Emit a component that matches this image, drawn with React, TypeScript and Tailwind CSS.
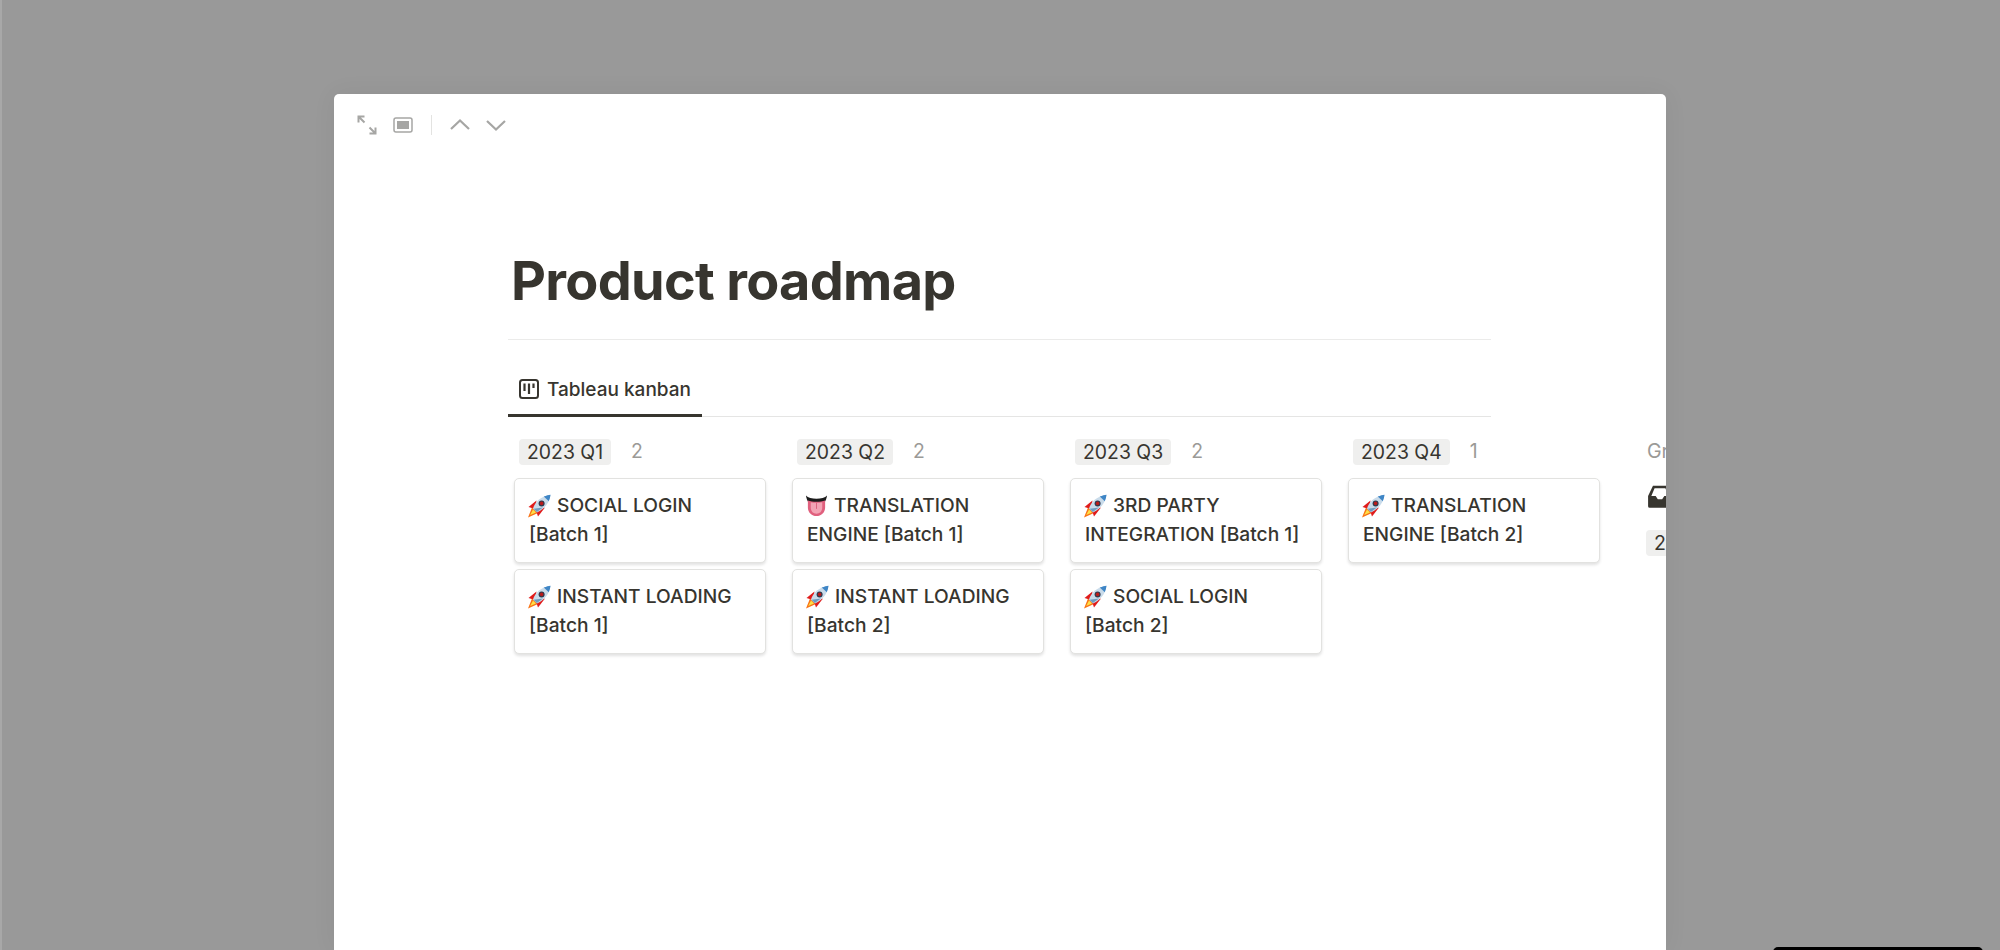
import React from 'react';

const RocketIcon = () => (
  <svg viewBox="0 0 24 24" className="-ml-[1px] h-[24px] w-[24px] shrink-0">
    <path d="M1 23.5 L5 13.5 L11 19 Z" fill="#f97316" />
    <path d="M3.2 21 L6 15.5 L9 18.5 Z" fill="#fde047" />
    <path d="M1.5 13 L9.5 6.5 L8 15 Z" fill="#e01b1b" />
    <path d="M11 22.5 L18 13.5 L9 16.5 Z" fill="#e01b1b" />
    <path d="M6 14.5 C8 8 14 2 23.5 0.8 C22.5 9.5 16.5 15.5 10 18.5 Z" fill="#c9dbea" />
    <path d="M16.8 2.6 C19.5 1.6 21.5 1 23.5 0.8 C23.3 3 22.7 5.2 21.8 7.2 Z" fill="#3f86c6" />
    <path d="M6.6 14.8 L9.8 18 L16 13.5 Z" fill="#6f9cc0" />
    <circle cx="14.6" cy="9.4" r="3" fill="#2f3b4f" />
    <circle cx="14.6" cy="9.4" r="1.8" fill="#b91c1c" />
  </svg>
);

const TongueIcon = () => (
  <svg viewBox="0 0 24 24" className="-ml-[1px] h-[23px] w-[23px] shrink-0">
    <path d="M1 1.5 C5 6 19 6 23 1.5 C22.5 5 21.5 7 20.5 8.5 L3.5 8.5 C2.5 7 1.5 5 1 1.5 Z" fill="#1c1c1c" />
    <path d="M3 6.8 C8 8.6 16 8.6 21 6.8 L21 14 C21 19.5 17 23 12 23 C7 23 3 19.5 3 14 Z" fill="#e0607e" />
    <path d="M6 8.5 C9 9.2 15 9.2 18 8.5 L18 14 C18 18 15.5 20.5 12 20.5 C8.5 20.5 6 18 6 14 Z" fill="#f3a3b4" />
    <path d="M12 9 L12 15.5" stroke="#d9607c" strokeWidth="1" />
  </svg>
);

const columns = [
  {
    name: '2023 Q1',
    count: 2,
    cards: [
      { icon: 'rocket', first: 'SOCIAL LOGIN', second: '[Batch 1]' },
      { icon: 'rocket', first: 'INSTANT LOADING', second: '[Batch 1]' },
    ],
  },
  {
    name: '2023 Q2',
    count: 2,
    cards: [
      { icon: 'tongue', first: 'TRANSLATION', second: 'ENGINE [Batch 1]' },
      { icon: 'rocket', first: 'INSTANT LOADING', second: '[Batch 2]' },
    ],
  },
  {
    name: '2023 Q3',
    count: 2,
    cards: [
      { icon: 'rocket', first: '3RD PARTY', second: 'INTEGRATION [Batch 1]' },
      { icon: 'rocket', first: 'SOCIAL LOGIN', second: '[Batch 2]' },
    ],
  },
  {
    name: '2023 Q4',
    count: 1,
    cards: [{ icon: 'rocket', first: 'TRANSLATION', second: 'ENGINE [Batch 2]' }],
  },
];

export default function App() {
  return (
    <div className="relative h-[950px] w-[2000px] overflow-hidden border-l-2 border-[#a8a8a8] bg-[#999999] pt-[94px] pl-[332px] font-['Inter',sans-serif] text-[#37352f]">
      <div className="h-full w-[1332px] overflow-hidden rounded-t-[5px] bg-white shadow-[0_0_24px_rgba(0,0,0,0.06)]">
        {/* top toolbar */}
        <div className="flex h-[62px] items-center pl-[23px] text-[#a6a6a4]">
          <svg viewBox="0 0 20 20" className="h-[20px] w-[20px]" fill="none" stroke="currentColor" strokeWidth="2">
            <path d="M1.5 7.5 V1.5 H7.5 M1.5 1.5 L7.5 7.5 M12.5 12.5 L18.5 18.5 M18.5 12.5 V18.5 H12.5" />
          </svg>
          <svg viewBox="0 0 20 20" className="ml-[16px] h-[20px] w-[20px]" fill="none">
            <rect x="1" y="3" width="18" height="14" rx="2" stroke="currentColor" strokeWidth="1.5" />
            <rect x="4" y="6" width="12" height="8" fill="currentColor" />
          </svg>
          <div className="ml-[18px] h-[20px] w-px bg-[#e3e3e1]" />
          <svg viewBox="0 0 20 20" className="ml-[18px] h-[20px] w-[20px]" fill="none" stroke="currentColor" strokeWidth="2.2">
            <path d="M1 14 L10 5.5 L19 14" />
          </svg>
          <svg viewBox="0 0 20 20" className="ml-[16px] h-[20px] w-[20px]" fill="none" stroke="currentColor" strokeWidth="2.2">
            <path d="M1 6 L10 14.5 L19 6" />
          </svg>
        </div>

        <div className="ml-[174px] w-[983px]">
          <h1 className="pt-[93px] pl-[3px] text-[54px] leading-[64px] font-bold tracking-[-0.7px]">Product roadmap</h1>
          <div className="mt-[26px] h-px bg-[#ebebea]" />

          {/* tab */}
          <div className="mt-[25px] border-b border-[#e5e5e4]">
            <div className="-mb-px flex h-[52px] w-[194px] items-start border-b-[3px] border-[#37352f] pt-[13px] pl-[11px]">
              <svg viewBox="0 0 20 20" className="mt-[1px] h-[20px] w-[20px]" fill="none">
                <rect x="1" y="1" width="18" height="18" rx="2.5" stroke="currentColor" strokeWidth="2" />
                <path d="M5.5 4.5 V12 M10 4.5 V15 M14.5 4.5 V9" stroke="currentColor" strokeWidth="2.2" />
              </svg>
              <span className="ml-[8px] text-[19px] leading-[24px] font-[450]">Tableau kanban</span>
            </div>
          </div>

          {/* board */}
          <div className="mt-[22px] ml-[6px] flex w-[1200px] gap-[26px]">
            {columns.map((col) => (
              <div key={col.name} className="w-[252px] shrink-0">
                <div className="flex h-[26px] items-center pl-[5px]">
                  <span className="rounded-[4px] bg-[#efefee] px-[8px] text-[19.4px] leading-[26px]">{col.name}</span>
                  <span className="ml-[20px] text-[19.4px] text-[#9b9a97]">{col.count}</span>
                </div>
                <div className="mt-[13px] flex flex-col gap-[6px]">
                  {col.cards.map((card) => (
                    <div
                      key={card.first + card.second}
                      className="h-[85px] rounded-[5px] border border-[#e2e2e0] bg-white px-[13px] pt-[12px] text-[19.2px] leading-[29px] font-[450] shadow-[0_2px_3px_rgba(15,15,15,0.12)]"
                    >
                      <div className="flex items-center gap-[6px]">
                        {card.icon === 'tongue' ? <TongueIcon /> : <RocketIcon />}
                        <span>{card.first}</span>
                      </div>
                      <div className="pl-[1px]">{card.second}</div>
                    </div>
                  ))}
                </div>
              </div>
            ))}

            {/* hidden groups column, cut by the edge */}
            <div className="ml-[21px] w-[120px] shrink-0">
              <div className="flex h-[26px] items-center text-[19.6px] text-[#9b9a97]">Groupes</div>
              <svg viewBox="0 0 24 24" className="mt-[19px] h-[26px] w-[26px]" fill="#37352f">
                <path d="M5.5 1.5 H18.5 L23 11 V20.5 Q23 22 21.5 22 H2.5 Q1 22 1 20.5 V11 Z M7 4 L4 11 H8 L10 14 H14 L16 11 H20 L17 4 Z" fillRule="evenodd" />
              </svg>
              <div className="mt-[20px] -ml-[1px] w-fit rounded-[4px] bg-[#efefee] px-[8px] text-[19.6px] leading-[26px]">2</div>
            </div>
          </div>
        </div>
      </div>

      {/* black bar peeking in at the bottom */}
      <div className="absolute top-[947px] left-[1771px] h-[20px] w-[210px] rounded-t-[5px] bg-black" />
    </div>
  );
}
